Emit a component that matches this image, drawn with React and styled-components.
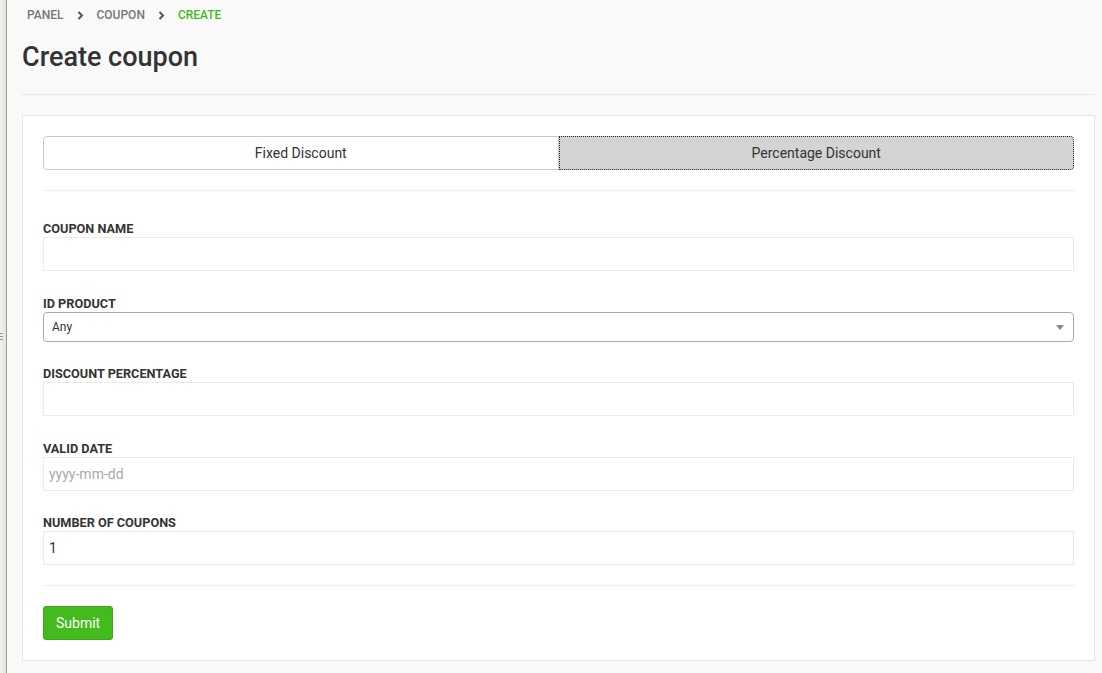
import React from "react";
import styled, { createGlobalStyle } from "styled-components";

const GlobalStyle = createGlobalStyle`
  html, body {
    margin: 0;
    padding: 0;
    background: #f9f9f9;
    font-family: Roboto, "Liberation Sans", sans-serif;
    color: #333;
  }
  * { box-sizing: border-box; }
`;

const Layout = styled.div`
  display: flex;
  min-height: 673px;
`;

const Gutter = styled.div`
  width: 7px;
  flex: none;
  background: linear-gradient(to right, #f3f1ef, #e6e2de);
  border-right: 1px solid #a49b93;
  display: flex;
  align-items: center;
`;

const Grip = styled.div`
  width: 3px;
  display: flex;
  flex-direction: column;
  gap: 2px;
  span {
    height: 1px;
    background: #9a928b;
  }
`;

const Main = styled.main`
  flex: 1;
  padding: 0 7px 12px 15px;
`;

const Crumbs = styled.nav`
  display: flex;
  align-items: center;
  gap: 13px;
  height: 30px;
  padding-left: 5px;
  font-size: 12px;
  font-weight: 500;
  text-transform: uppercase;
  color: #777;
`;

const Crumb = styled.span`
  color: ${(p) => (p.$active ? "#3fbb1a" : "#777")};
`;

const Chevron = () => (
  <svg width="7" height="9" viewBox="0 0 7 9">
    <path d="M1.5 1 L5 4.5 L1.5 8" stroke="#555" strokeWidth="2" fill="none" />
  </svg>
);

const Title = styled.h1`
  margin: 0;
  padding: 11px 0 20px;
  font-size: 27px;
  line-height: 33px;
  font-weight: 500;
  color: #333;
  border-bottom: 1px solid #e8e8e8;
`;

const Card = styled.section`
  margin-top: 20px;
  background: #fff;
  border: 1px solid #e6e6e6;
  padding: 20px;
`;

const Tabs = styled.div`
  display: flex;
`;

const Tab = styled.button`
  flex: 1;
  height: 34px;
  font-family: inherit;
  font-size: 14px;
  color: #333;
  background: ${(p) => (p.$active ? "#d4d4d4" : "#fff")};
  border: 1px ${(p) => (p.$active ? "dotted #222" : "solid #c9c9c9")};
  border-radius: ${(p) => (p.$first ? "4px 0 0 4px" : "0 4px 4px 0")};
  cursor: pointer;
`;

const Rule = styled.hr`
  border: none;
  border-top: 1px solid #ececec;
  margin: 20px 0;
`;

const Fields = styled.div`
  display: flex;
  flex-direction: column;
  gap: 24.5px;
  padding-top: 10px;
`;

const Group = styled.div``;

const Label = styled.label`
  display: block;
  font-size: 12.7px;
  font-weight: 700;
  line-height: 16px;
  color: #333;
  text-transform: uppercase;
`;

const Input = styled.input`
  display: block;
  width: 100%;
  height: 34px;
  padding: 0 5px;
  border: 1px solid #ebebeb;
  font-family: inherit;
  font-size: 14px;
  color: #333;
  outline: none;
  &::placeholder { color: #aaa; }
`;

const SelectBox = styled.div`
  position: relative;
  height: 30px;
  border: 1px solid #aaa;
  border-radius: 4px;
  display: flex;
  align-items: center;
  padding: 0 8px;
  font-size: 12px;
  color: #333;
  &::after {
    content: "";
    position: absolute;
    right: 9px;
    top: 12px;
    border-left: 4px solid transparent;
    border-right: 4px solid transparent;
    border-top: 5px solid #888;
  }
`;

const Submit = styled.button`
  height: 34px;
  padding: 0 12px;
  background: #43bb1d;
  border: 1px solid #3aa617;
  border-radius: 3px;
  color: #fff;
  font-family: inherit;
  font-size: 14px;
  cursor: pointer;
`;

export default function App() {
  return (
    <>
      <GlobalStyle />
      <Layout>
        <Gutter>
          <Grip><span /><span /><span /></Grip>
        </Gutter>
        <Main>
          <Crumbs>
            <Crumb>Panel</Crumb>
            <Chevron />
            <Crumb>Coupon</Crumb>
            <Chevron />
            <Crumb $active>Create</Crumb>
          </Crumbs>
          <Title>Create coupon</Title>
          <Card>
            <Tabs>
              <Tab $first>Fixed Discount</Tab>
              <Tab $active>Percentage Discount</Tab>
            </Tabs>
            <Rule />
            <Fields>
              <Group>
                <Label>Coupon name</Label>
                <Input />
              </Group>
              <Group>
                <Label>ID product</Label>
                <SelectBox>Any</SelectBox>
              </Group>
              <Group>
                <Label>Discount percentage</Label>
                <Input />
              </Group>
              <Group>
                <Label>Valid date</Label>
                <Input placeholder="yyyy-mm-dd" />
              </Group>
              <Group>
                <Label>Number of coupons</Label>
                <Input defaultValue="1" />
              </Group>
            </Fields>
            <Rule />
            <Submit>Submit</Submit>
          </Card>
        </Main>
      </Layout>
    </>
  );
}
